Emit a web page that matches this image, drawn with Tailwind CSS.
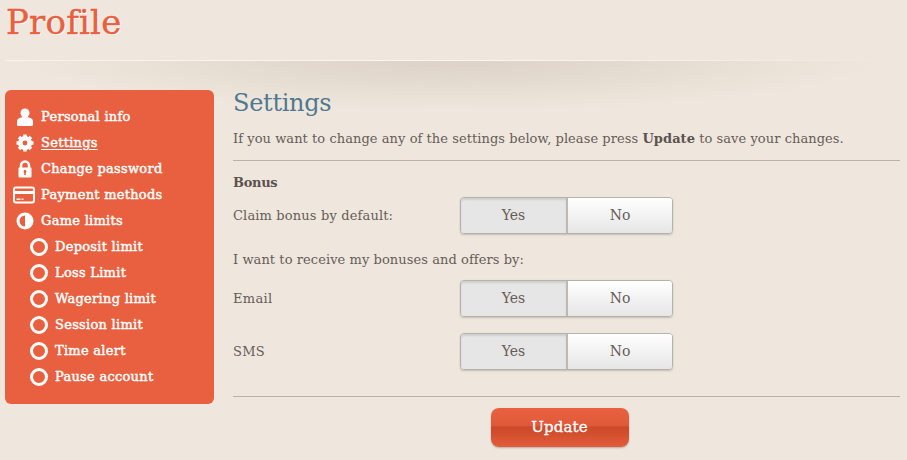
<!DOCTYPE html>
<html lang="en">
<head>
    <meta charset="UTF-8">
    <title>Profile</title>
    <script src="https://cdn.jsdelivr.net/npm/@tailwindcss/browser@4"></script>
</head>
<body class="h-[460px] w-[907px] overflow-hidden bg-[#efe7dd] font-['DejaVu_Serif',serif] text-[13px] text-[#665c58]">
    <header class="relative h-[90px] px-[5px]">
        <h1 class="pl-px pt-[1px] text-[34px] leading-[42px] tracking-[0.2px] text-[#e8603f] [text-shadow:1px_1px_0_#fff] [-webkit-text-stroke:0.4px_#e8603f]">Profile</h1>
        <div class="absolute left-[5px] top-[60px] h-px w-[895px] bg-gradient-to-r from-[#f7f2ea] via-[#fbf8f3] to-[#efe7dd]"></div>
        <div class="absolute left-[20px] top-[61px] h-[50px] w-[860px] bg-[radial-gradient(ellipse_50%_100%_at_50%_0%,#dcd2c6,#efe7dd00)]"></div>
    </header>

    <div class="flex items-start gap-[19px] px-[5px]">
        <!-- side nav -->
        <nav class="relative h-[314px] w-[209px] rounded-md bg-[#e8603f] pt-[14px] text-[13px] leading-[26px] tracking-[0.27px] text-white [-webkit-text-stroke:0.45px_#fff]">
            <a class="flex h-[26px] items-center">
                <span class="flex w-9 justify-center pl-[3px]">
                    <svg width="18" height="18" viewBox="0 0 18 18" fill="#fff"><circle cx="9" cy="5" r="4.5"/><path d="M1 17v-3.5C1 10.5 4 9 9 9s8 1.500 8 4.500V17c0 .5-1 1-2 1H3c-1 0-2-.5-2-1z"/></svg>
                </span>
                Personal info
            </a>
            <a class="flex h-[26px] items-center">
                <span class="flex w-9 justify-center pl-[3px]">
                    <svg width="18" height="18" viewBox="0 0 18 18"><circle cx="9" cy="9" r="5" fill="none" stroke="#fff" stroke-width="4"/><path d="M9 0.500v17M0.500 9h17M3 3l12 12M15 3L3 15" stroke="#fff" stroke-width="3.500"/><circle cx="9" cy="9" r="2.400" fill="#e8603f"/></svg>
                </span>
                <span class="underline underline-offset-2">Settings</span>
            </a>
            <a class="flex h-[26px] items-center">
                <span class="flex w-9 justify-center pl-[3px]">
                    <svg width="16" height="18" viewBox="0 0 16 18"><path d="M4 8V5.500a4 4 0 0 1 8 0V8" fill="none" stroke="#fff" stroke-width="2.500"/><rect x="1.500" y="7.500" width="13" height="10" rx="1" fill="#fff"/><circle cx="8" cy="11.500" r="1.400" fill="#e8603f"/><rect x="7.200" y="11.500" width="1.600" height="3.500" fill="#e8603f"/></svg>
                </span>
                Change password
            </a>
            <a class="flex h-[26px] items-center">
                <span class="flex w-9 justify-start pl-[8px]">
                    <svg width="22" height="18" viewBox="0 0 22 18"><rect x="1" y="1.500" width="20" height="15" rx="2" fill="none" stroke="#fff" stroke-width="2"/><rect x="1" y="5" width="20" height="3" fill="#fff"/><rect x="3.500" y="12.500" width="4" height="1.400" fill="#fff"/><rect x="8.500" y="12.500" width="2" height="1.400" fill="#fff"/></svg>
                </span>
                Payment methods
            </a>
            <a class="flex h-[26px] items-center">
                <span class="flex w-9 justify-center pl-[3px]">
                    <svg width="18" height="18" viewBox="0 0 18 18"><circle cx="9" cy="9" r="8.500" fill="#fff"/><path d="M9 3.500a5.500 5.500 0 0 0 0 11z" fill="#e8603f"/></svg>
                </span>
                Game limits
            </a>
            <ul>
                <li class="flex h-[26px] items-center pl-[25px]"><span class="mr-[7px] size-[18px] rounded-full border-[3.5px] border-white"></span>Deposit limit</li>
                <li class="flex h-[26px] items-center pl-[25px]"><span class="mr-[7px] size-[18px] rounded-full border-[3.5px] border-white"></span>Loss Limit</li>
                <li class="flex h-[26px] items-center pl-[25px]"><span class="mr-[7px] size-[18px] rounded-full border-[3.5px] border-white"></span>Wagering limit</li>
                <li class="flex h-[26px] items-center pl-[25px]"><span class="mr-[7px] size-[18px] rounded-full border-[3.5px] border-white"></span>Session limit</li>
                <li class="flex h-[26px] items-center pl-[25px]"><span class="mr-[7px] size-[18px] rounded-full border-[3.5px] border-white"></span>Time alert</li>
                <li class="flex h-[26px] items-center pl-[25px]"><span class="mr-[7px] size-[18px] rounded-full border-[3.5px] border-white"></span>Pause account</li>
            </ul>
        </nav>

        <!-- settings panel -->
        <main class="relative w-[667px]">
            <h2 class="h-[34px] text-[24px] leading-[26px] tracking-[-0.3px] text-[#50788f]">Settings</h2>
            <p class="h-[36px] pt-[6px] leading-[18px] tracking-[0.06px]">If you want to change any of the settings below, please press <b class="text-[#5c5250]">Update</b> to save your changes.</p>
            <div class="border-t border-[#bdb1a6] pt-[13px]">
                <h3 class="h-[17px] font-bold leading-[17px] tracking-[-0.3px] text-[#5c5250]">Bonus</h3>
            </div>
            <div class="mt-[6px] flex h-[37px] items-center justify-between pr-[227px]">
                <span class="tracking-[0.15px]">Claim bonus by default:</span>
                <div class="flex h-[37px] w-[213px] rounded border border-[#b5b1ac] text-[14px] shadow-[0_1px_2px_#00000030]">
                    <span class="flex w-[107px] items-center justify-center rounded-l-[3px] border-r-2 border-[#bdbab6] bg-[#e6e6e6] shadow-[inset_0_2px_2px_#0000001a]">Yes</span>
                    <span class="flex flex-1 items-center justify-center rounded-r-[3px] bg-gradient-to-b from-white to-[#e6e6e6]">No</span>
                </div>
            </div>
            <p class="mt-[17px] h-[18px] leading-[18px] tracking-[0.07px]">I want to receive my bonuses and offers by:</p>
            <div class="mt-[11px] flex h-[37px] items-center justify-between pr-[227px]">
                <span class="tracking-[0.3px]">Email</span>
                <div class="flex h-[37px] w-[213px] rounded border border-[#b5b1ac] text-[14px] shadow-[0_1px_2px_#00000030]">
                    <span class="flex w-[107px] items-center justify-center rounded-l-[3px] border-r-2 border-[#bdbab6] bg-[#e6e6e6] shadow-[inset_0_2px_2px_#0000001a]">Yes</span>
                    <span class="flex flex-1 items-center justify-center rounded-r-[3px] bg-gradient-to-b from-white to-[#e6e6e6]">No</span>
                </div>
            </div>
            <div class="mt-4 flex h-[37px] items-center justify-between pr-[227px]">
                <span class="tracking-[0.3px]">SMS</span>
                <div class="flex h-[37px] w-[213px] rounded border border-[#b5b1ac] text-[14px] shadow-[0_1px_2px_#00000030]">
                    <span class="flex w-[107px] items-center justify-center rounded-l-[3px] border-r-2 border-[#bdbab6] bg-[#e6e6e6] shadow-[inset_0_2px_2px_#0000001a]">Yes</span>
                    <span class="flex flex-1 items-center justify-center rounded-r-[3px] bg-gradient-to-b from-white to-[#e6e6e6]">No</span>
                </div>
            </div>
            <div class="mt-[26px] flex justify-center border-t border-[#bdb1a6] pr-[14px] pt-[11px]">
                <button class="h-[39px] w-[138px] rounded-lg bg-[linear-gradient(#e8603f,#e05a3a_46%,#cc4a2a_48%,#cf4d2c_60%,#e35c3c)] text-[15px] tracking-[0.1px] text-white shadow-[0_1px_2px_#00000040] [-webkit-text-stroke:0.35px_#fff]">Update</button>
            </div>
        </main>
    </div>
</body>
</html>
